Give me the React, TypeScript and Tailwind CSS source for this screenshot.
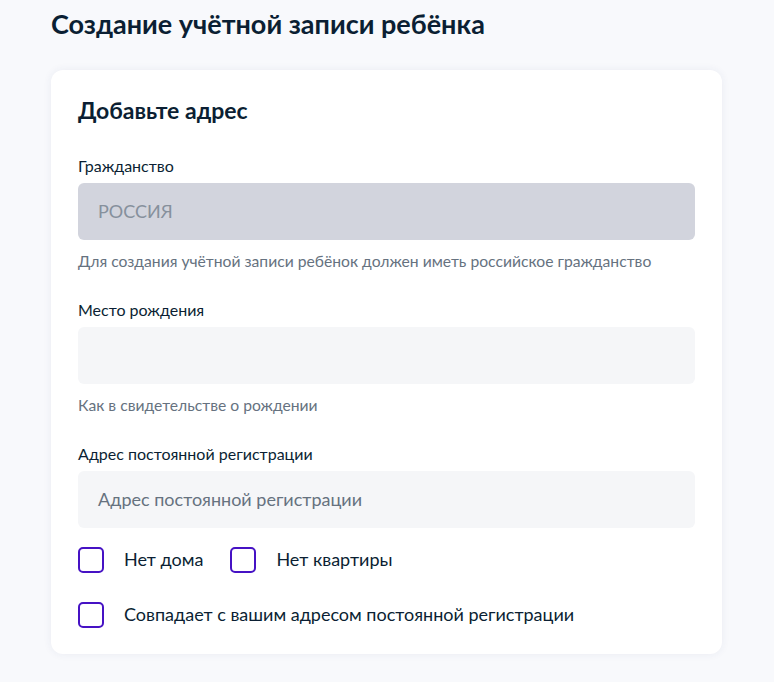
import React from "react";

function Field({ label, value, placeholder, disabled, hint }: { label: string; value?: string; placeholder?: string; disabled?: boolean; hint?: string }) {
  return (
    <div>
      <div className="text-[16px] leading-5 text-[#0b1f33]">{label}</div>
      <div
        className={
          "mt-[7px] flex h-[57px] items-center rounded-[6px] px-[20px] text-[18px] " +
          (disabled ? "bg-[#d2d4dd] text-[#86909c]" : "bg-[#f5f6f8] text-[#66727f]")
        }
      >
        {value ?? placeholder ?? ""}
      </div>
      {hint && <div className="mt-[11px] text-[15.7px] leading-5 text-[#66727f]">{hint}</div>}
    </div>
  );
}

function Check({ label }: { label: string }) {
  return (
    <label className="flex items-center gap-5">
      <span className="h-[26px] w-[26px] shrink-0 rounded-[5px] border-2 border-[#4612c4] bg-white" />
      <span className="text-[18px] text-[#0b1f33]">{label}</span>
    </label>
  );
}

export default function App() {
  return (
    <div className="min-h-[682px] bg-[#f8f9fc] px-[51px] pt-[8px] font-['Lato',sans-serif]">
      <h1 className="text-[27px] font-bold leading-8 text-[#0b1f33]">Создание учётной записи ребёнка</h1>

      <div className="mt-[30px] w-[671px] rounded-[12px] bg-white px-[27px] pb-[26px] pt-[26px] shadow-[0_0_8px_rgba(40,60,110,0.07)]">
        <h2 className="text-[23px] font-bold leading-7 text-[#0b1f33]">Добавьте адрес</h2>

        <div className="mt-[32px] flex flex-col gap-[29px]">
          <Field
            label="Гражданство"
            value="РОССИЯ"
            disabled
            hint="Для создания учётной записи ребёнок должен иметь российское гражданство"
          />
          <Field label="Место рождения" hint="Как в свидетельстве о рождении" />
          <Field label="Адрес постоянной регистрации" placeholder="Адрес постоянной регистрации" />
        </div>

        <div className="mt-[18px] flex gap-[27px]">
          <Check label="Нет дома" />
          <Check label="Нет квартиры" />
        </div>
        <div className="mt-[28px]">
          <Check label="Совпадает с вашим адресом постоянной регистрации" />
        </div>
      </div>
    </div>
  );
}
